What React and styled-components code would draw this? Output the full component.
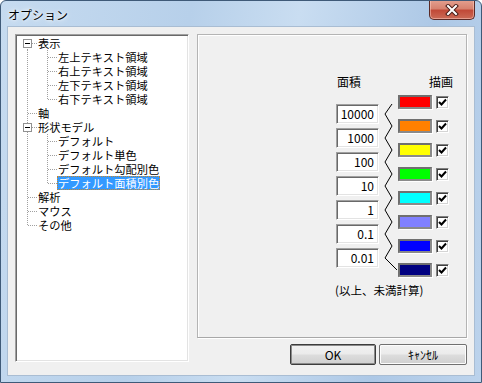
import React from 'react'
import styled, { createGlobalStyle } from 'styled-components'

const GlobalStyle = createGlobalStyle`
  html, body {
    margin: 0;
    padding: 0;
    background: #fff;
  }
  body {
    font-family: "Noto Sans CJK JP", "Liberation Sans", sans-serif;
    font-size: 12px;
    color: #000;
  }
`

const Window = styled.div`
  width: 482px;
  height: 383px;
  box-sizing: border-box;
  display: flex;
  flex-direction: column;
  border: 1px solid #3f5a78;
  border-radius: 6px 6px 0 0;
  background: linear-gradient(100deg, #c6dbf0 0%, #b7d0ea 35%, #c9ddf1 55%, #adc8e6 80%, #bcd3ec 100%);
  overflow: hidden;
`

const TitleBar = styled.div`
  height: 29px;
  display: flex;
  align-items: flex-start;
  padding-left: 7px;
`

const Title = styled.div`
  margin-top: 7px;
  font-size: 12px;
  line-height: 14px;
  text-shadow: 0 0 6px #fff, 0 0 3px #fff;
`

const CloseButton = styled.div`
  margin-left: auto;
  margin-right: 6px;
  margin-top: -1px;
  width: 46px;
  height: 20px;
  box-sizing: border-box;
  border: 1px solid #5a2a26;
  border-top: none;
  border-radius: 0 0 5px 5px;
  background: linear-gradient(#e4a190 0%, #d7826f 45%, #c14a38 55%, #cb6b56 100%);
  box-shadow: inset 0 0 0 1px rgba(255, 210, 200, 0.5);
  display: flex;
  align-items: center;
  justify-content: center;
`

const Body = styled.div`
  flex: 1;
  padding: 0 7px 7px 7px;
  display: flex;
`

const Client = styled.div`
  flex: 1;
  display: flex;
  gap: 8px;
  padding: 7px 7px 10px 7px;
  background: #f0f0f0;
  box-shadow: 0 0 0 1px #a9bdd3;
`

const TreeBox = styled.div`
  width: 174px;
  height: 328px;
  box-sizing: border-box;
  background: #fff;
  border: 1px solid;
  border-color: #a0a0a0 #fff #fff #a0a0a0;
  box-shadow: inset 1px 1px 0 #696969, inset -1px -1px 0 #e3e3e3;
  padding: 1px;
`

const TreeRow = styled.div`
  height: 14px;
  display: flex;
  align-items: center;
  white-space: nowrap;
`

const TreeLabel = styled.span`
  height: 14px;
  font-size: 11.25px;
  line-height: 14px;
  box-sizing: border-box;
  padding: 0 1px;
  background: ${p => (p.$selected ? '#3399ff' : 'transparent')};
  color: ${p => (p.$selected ? '#fff' : '#000')};
  outline: ${p => (p.$selected ? '1px dotted #c8862a' : 'none')};
  outline-offset: -1px;
`

const RightSide = styled.div`
  width: 270px;
  display: flex;
  flex-direction: column;
`

const Panel = styled.div`
  height: 304px;
  box-sizing: border-box;
  border: 1px solid;
  border-color: #b4b4b4 #b4b4b4 #a8a8a8 #b4b4b4;
  box-shadow: inset 1px 1px 0 #fff, 1px 1px 0 #fff;
  padding: 40px 0 0 138px;
`

const Legend = styled.div`
  display: flex;
  align-items: flex-start;
`

const AreaCol = styled.div`
  width: 43px;
  display: flex;
  flex-direction: column;
`

const ColHead = styled.div`
  height: 14px;
  line-height: 14px;
  text-align: ${p => p.$align || 'left'};
  padding-left: ${p => (p.$align === 'right' ? 0 : 1)}px;
  margin-right: ${p => (p.$align === 'right' ? -4 : 0)}px;
`

const Boxes = styled.div`
  margin-top: 15px;
  display: flex;
  flex-direction: column;
  gap: 4px;
`

const NumBox = styled.div`
  height: 20px;
  box-sizing: border-box;
  border: 1px solid;
  border-color: #a0a0a0 #fff #fff #a0a0a0;
  box-shadow: inset 1px 1px 0 #696969, inset -1px -1px 0 #e3e3e3;
  background: #fff;
  text-align: right;
  padding-right: 4px;
  line-height: 18px;
`

const Zig = styled.svg`
  margin-top: 20px;
  display: block;
`

const DrawCol = styled.div`
  width: 51px;
  display: flex;
  flex-direction: column;
`

const Swatches = styled.div`
  margin-top: 6px;
  display: flex;
  flex-direction: column;
  gap: 10px;
`

const SwatchRow = styled.div`
  height: 14px;
  display: flex;
  align-items: center;
  gap: 4px;
`

const Swatch = styled.div`
  width: 34px;
  height: 14px;
  box-sizing: border-box;
  border: 2px solid;
  border-color: #6f6f6f #8a8a8a #8a8a8a #6f6f6f;
  box-shadow: 1px 1px 0 #fff;
  background: ${p => p.$color};
`

const Check = styled.div`
  width: 13px;
  height: 13px;
  box-sizing: border-box;
  border: 1px solid;
  border-color: #808080 #fff #fff #808080;
  box-shadow: inset 1px 1px 0 #404040, inset -1px -1px 0 #d4d4d4;
  background: #fff;
  display: flex;
  align-items: center;
  justify-content: center;
`

const Caption = styled.div`
  margin-top: 6px;
  margin-left: -1px;
  font-size: 11.5px;
  line-height: 14px;
`

const ButtonRow = styled.div`
  margin-top: 6px;
  display: flex;
  justify-content: flex-end;
  gap: 3px;
`

const Button = styled.div`
  width: ${p => p.$width}px;
  height: 21px;
  box-sizing: border-box;
  border: 1px solid ${p => (p.$default ? '#3c3c3c' : '#707070')};
  border-radius: 2px;
  background: linear-gradient(#f2f2f2 0%, #ebebeb 48%, #dddddd 52%, #cfcfcf 100%);
  box-shadow: inset 0 0 0 1px ${p => (p.$default ? '#8a8a8a' : '#fcfcfc')};
  display: flex;
  align-items: center;
  justify-content: center;
  line-height: 14px;
`

const tree = [
  { label: '表示', level: 0, open: true, first: true },
  { label: '左上テキスト領域', level: 1 },
  { label: '右上テキスト領域', level: 1 },
  { label: '左下テキスト領域', level: 1 },
  { label: '右下テキスト領域', level: 1, lastChild: true },
  { label: '軸', level: 0 },
  { label: '形状モデル', level: 0, open: true },
  { label: 'デフォルト', level: 1 },
  { label: 'デフォルト単色', level: 1 },
  { label: 'デフォルト勾配別色', level: 1 },
  { label: 'デフォルト面積別色', level: 1, lastChild: true, selected: true },
  { label: '解析', level: 0 },
  { label: 'マウス', level: 0 },
  { label: 'その他', level: 0, last: true },
]

const areas = ['10000', '1000', '100', '10', '1', '0.1', '0.01']
const colors = ['#ff0000', '#ff8000', '#ffff00', '#00ff00', '#00ffff', '#8080ff', '#0000ff', '#000080']

const dot = { stroke: '#a0a0a0', strokeWidth: 1, strokeDasharray: '1 1', shapeRendering: 'crispEdges' }

// tree connector lines for one row
const Connector = ({ item }) => {
  const w = item.level === 0 ? 20 : 40
  return (
    <svg width={w} height={14} style={{ display: 'block', flex: 'none' }}>
      <line x1={10.5} x2={10.5} y1={item.first ? 7 : 0} y2={item.last ? 7 : 14} {...dot} />
      {item.level === 0 ? (
        <line x1={11} x2={20} y1={7.5} y2={7.5} {...dot} />
      ) : (
        <>
          <line x1={30.5} x2={30.5} y1={0} y2={item.lastChild ? 7 : 14} {...dot} />
          <line x1={31} x2={40} y1={7.5} y2={7.5} {...dot} />
        </>
      )}
      {item.open && (
        <>
          <rect x={6.5} y={3.5} width={8} height={8} fill="#fff" stroke="#919191" shapeRendering="crispEdges" />
          <line x1={8} x2={13} y1={7.5} y2={7.5} stroke="#000" shapeRendering="crispEdges" />
        </>
      )}
    </svg>
  )
}

const zigPoints = () => {
  const pts = []
  for (let k = 0; k < 7; k++) {
    pts.push(`13,${k === 0 ? 9 : 7 + 24 * k}`)
    pts.push(`6,${19 + 24 * k}`)
  }
  pts.push('18,175')
  return pts.join(' ')
}

const CheckMark = () => (
  <svg width={9} height={9} viewBox="0 0 9 9">
    <path d="M1 4 L3.5 6.5 L8 1.5" fill="none" stroke="#000" strokeWidth={2} />
  </svg>
)

const App = () => (
  <>
    <GlobalStyle />
    <Window>
      <TitleBar>
        <Title>オプション</Title>
        <CloseButton>
          <svg width={14} height={12} viewBox="0 0 14 12">
            <path d="M3 2 L11 10 M11 2 L3 10" stroke="#4b1d17" strokeWidth={4} strokeLinecap="square" />
            <path d="M3 2 L11 10 M11 2 L3 10" stroke="#fff" strokeWidth={2} strokeLinecap="square" />
          </svg>
        </CloseButton>
      </TitleBar>
      <Body>
        <Client>
          <TreeBox>
            {tree.map(item => (
              <TreeRow key={item.label}>
                <Connector item={item} />
                <TreeLabel $selected={item.selected}>{item.label}</TreeLabel>
              </TreeRow>
            ))}
          </TreeBox>
          <RightSide>
            <Panel>
              <Legend>
                <AreaCol>
                  <ColHead>面積</ColHead>
                  <Boxes>
                    {areas.map(a => (
                      <NumBox key={a}>{a}</NumBox>
                    ))}
                  </Boxes>
                </AreaCol>
                <Zig width={19} height={182}>
                  <polyline points={zigPoints()} fill="none" stroke="#000" strokeWidth={1} />
                </Zig>
                <DrawCol>
                  <ColHead $align="right">描画</ColHead>
                  <Swatches>
                    {colors.map(c => (
                      <SwatchRow key={c}>
                        <Swatch $color={c} />
                        <Check>
                          <CheckMark />
                        </Check>
                      </SwatchRow>
                    ))}
                  </Swatches>
                </DrawCol>
              </Legend>
              <Caption>(以上、未満計算)</Caption>
            </Panel>
            <ButtonRow>
              <Button $width={86} $default>OK</Button>
              <Button $width={88}>ｷｬﾝｾﾙ</Button>
            </ButtonRow>
          </RightSide>
        </Client>
      </Body>
    </Window>
  </>
)

export default App
